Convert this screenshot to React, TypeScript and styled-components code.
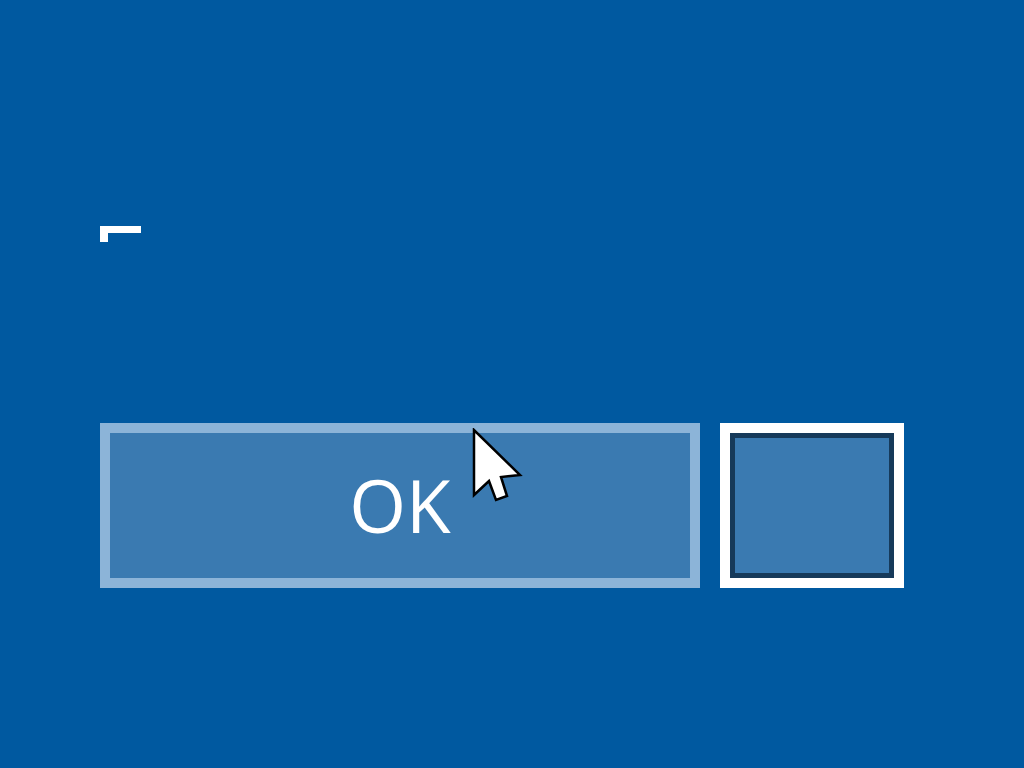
import React from "react";
import styled, { createGlobalStyle } from "styled-components";

const Global = createGlobalStyle`
  html, body { margin: 0; padding: 0; background: #0059a0; }
  #root { width: 1024px; height: 768px; }
`;

const Screen = styled.div`
  position: relative;
  width: 1024px;
  height: 768px;
  box-sizing: border-box;
  padding: 226px 0 0 100px;
  background: #0059a0;
  display: flex;
  flex-direction: column;
  font-family: "Open Sans", "Noto Sans", sans-serif;
  overflow: hidden;
`;

const Caret = styled.div`
  width: 41px;
  height: 16px;
  display: flex;
  flex-direction: column;
`;

const CaretTop = styled.div`
  height: 7px;
  background: #ffffff;
`;

const CaretStem = styled.div`
  width: 8px;
  flex: 1;
  background: #ffffff;
`;

const ButtonRow = styled.div`
  margin-top: 181px;
  display: flex;
  gap: 20px;
`;

const OkButton = styled.button`
  width: 600px;
  height: 165px;
  box-sizing: border-box;
  border: 10px solid #8cb4d8;
  background: #3a7ab1;
  color: #ffffff;
  font-family: "Open Sans", "Noto Sans", sans-serif;
  font-size: 73px;
  font-weight: 400;
  padding: 0;
  margin: 0;
  display: flex;
  align-items: center;
  justify-content: center;
  line-height: 1;
`;

const Label = styled.span`
  display: block;
  transform: translateY(-1px);
`;

const FocusBox = styled.div`
  width: 184px;
  height: 165px;
  box-sizing: border-box;
  border: 10px solid #ffffff;
  display: flex;
`;

const FocusInner = styled.div`
  flex: 1;
  border: 5px solid #163a5a;
  background: #3a7ab1;
`;

const Pointer = styled.svg`
  position: absolute;
  left: 472px;
  top: 428px;
`;

export default function App() {
  return (
    <>
      <Global />
      <Screen>
        <Caret>
          <CaretTop />
          <CaretStem />
        </Caret>
        <ButtonRow>
          <OkButton>
            <Label>OK</Label>
          </OkButton>
          <FocusBox>
            <FocusInner />
          </FocusBox>
        </ButtonRow>
        <Pointer width="54" height="76" viewBox="0 0 54 76">
          <polygon
            points="2,2 2,67 17,53 24,72 35,68 29,49 48,47"
            fill="#ffffff"
            stroke="#000000"
            strokeWidth="2.5"
            strokeLinejoin="miter"
          />
        </Pointer>
      </Screen>
    </>
  );
}
